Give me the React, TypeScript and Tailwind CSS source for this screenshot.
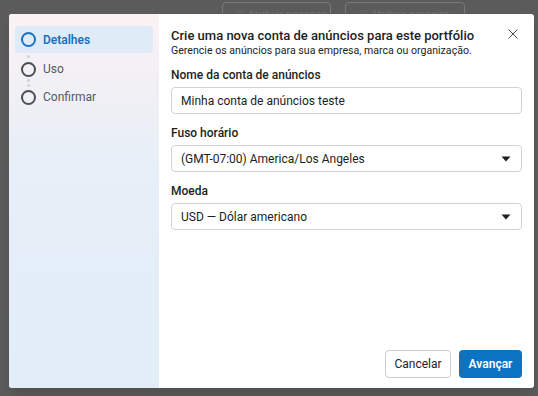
import React from 'react';

const font = { fontFamily: 'Roboto, "Noto Sans", sans-serif' };

function StepCircle({ active }: { active?: boolean }) {
  return (
    <span
      className={`block h-[15px] w-[15px] shrink-0 rounded-full border-2 ${
        active ? 'border-[#1a73c4]' : 'border-[#4a4f57]'
      }`}
    />
  );
}

function Dots({ count, h }: { count: number; h: string }) {
  return (
    <div className={`flex w-[27px] flex-col items-center justify-center gap-[2px] ${h}`}>
      {Array.from({ length: count }).map((_, i) => (
        <span key={i} className="h-[3px] w-[3px] rounded-full bg-[#cfd2d6]" />
      ))}
    </div>
  );
}

function Caret() {
  return (
    <svg width="10" height="6" viewBox="0 0 10 6" className="shrink-0">
      <path d="M0.5 0.5h9L5 5.5z" fill="#1c1e21" />
    </svg>
  );
}

function Field({ label, value, select }: { label: string; value: string; select?: boolean }) {
  return (
    <div className="flex flex-col">
      <label className="mb-[4px] text-[12px] font-medium leading-[16px] text-[#1c1e21]">{label}</label>
      <div className="flex h-[27px] items-center justify-between rounded-[4px] border border-[#cfd3d8] bg-white pl-[9px] pr-[10px]">
        <span className="text-[12px] leading-[16px] text-[#1c1e21]">{value}</span>
        {select && <Caret />}
      </div>
    </div>
  );
}

export default function App() {
  return (
    <div className="relative h-[396px] w-[538px] overflow-hidden bg-[#5b5b5c]" style={font}>
      {/* page underneath the overlay */}
      <div className="absolute inset-0 flex gap-[14px] pl-[222px] pt-[2px]">
        <div className="flex h-[20px] w-[109px] items-end rounded-[4px] border border-[#777a7e] pl-[12px] text-[11px] leading-[12px] text-[#6e7074]">
          ⚇ Atribuir pessoas
        </div>
        <div className="flex h-[20px] w-[120px] items-end rounded-[4px] border border-[#777a7e] pl-[12px] text-[11px] leading-[12px] text-[#6e7074]">
          ⚇ Atribuir parceiro
        </div>
      </div>

      <div className="relative ml-[9px] mt-[14px] flex h-[374px] w-[525px] overflow-hidden rounded-[3px] bg-white shadow-lg">
        <aside className="flex w-[150px] shrink-0 flex-col bg-gradient-to-b from-[#fbf1f2] via-[#e7eff8] via-40% to-[#e2edf8] px-[6px] pt-[12px]">
          <div className="flex h-[27px] items-center gap-[7px] rounded-[4px] bg-[#dfebf7] pl-[6px]">
            <StepCircle active />
            <span className="text-[12px] font-semibold text-[#1a6fbe]">Detalhes</span>
          </div>
          <Dots count={1} h="h-[6px]" />
          <div className="flex h-[20px] items-center gap-[7px] pl-[6px]">
            <StepCircle />
            <span className="text-[12px] text-[#55595f]">Uso</span>
          </div>
          <Dots count={2} h="h-[8px]" />
          <div className="flex h-[20px] items-center gap-[7px] pl-[6px]">
            <StepCircle />
            <span className="text-[12px] text-[#55595f]">Confirmar</span>
          </div>
        </aside>

        <main className="flex flex-1 flex-col px-[12px] pb-[10px] pt-[13px]">
          <div className="flex items-start justify-between">
            <div>
              <h2 className="text-[13px] font-medium leading-[17px] text-[#1c1e21]">
                Crie uma nova conta de anúncios para este portfólio
              </h2>
              <p className="text-[10.6px] leading-[13px] text-[#1c1e21]">
                Gerencie os anúncios para sua empresa, marca ou organização.
              </p>
            </div>
            <button className="mr-[4px] mt-[2px] text-[#4b4f56]">
              <svg width="10" height="10" viewBox="0 0 10 10">
                <path d="M0.5 0.5l9 9M9.5 0.5l-9 9" stroke="currentColor" strokeWidth="1" />
              </svg>
            </button>
          </div>

          <div className="mt-[10px] flex flex-col gap-[11px]">
            <Field label="Nome da conta de anúncios" value="Minha conta de anúncios teste" />
            <Field label="Fuso horário" value="(GMT-07:00) America/Los Angeles" select />
            <Field label="Moeda" value="USD — Dólar americano" select />
          </div>

          <div className="mt-auto flex justify-end gap-[8px]">
            <button className="h-[28px] w-[66px] rounded-[4px] border border-[#c9ccd1] bg-white text-[12px] text-[#1c1e21]">
              Cancelar
            </button>
            <button className="h-[28px] w-[63px] rounded-[4px] bg-[#0a74c2] text-[12px] font-semibold text-white">
              Avançar
            </button>
          </div>
        </main>
      </div>
    </div>
  );
}
